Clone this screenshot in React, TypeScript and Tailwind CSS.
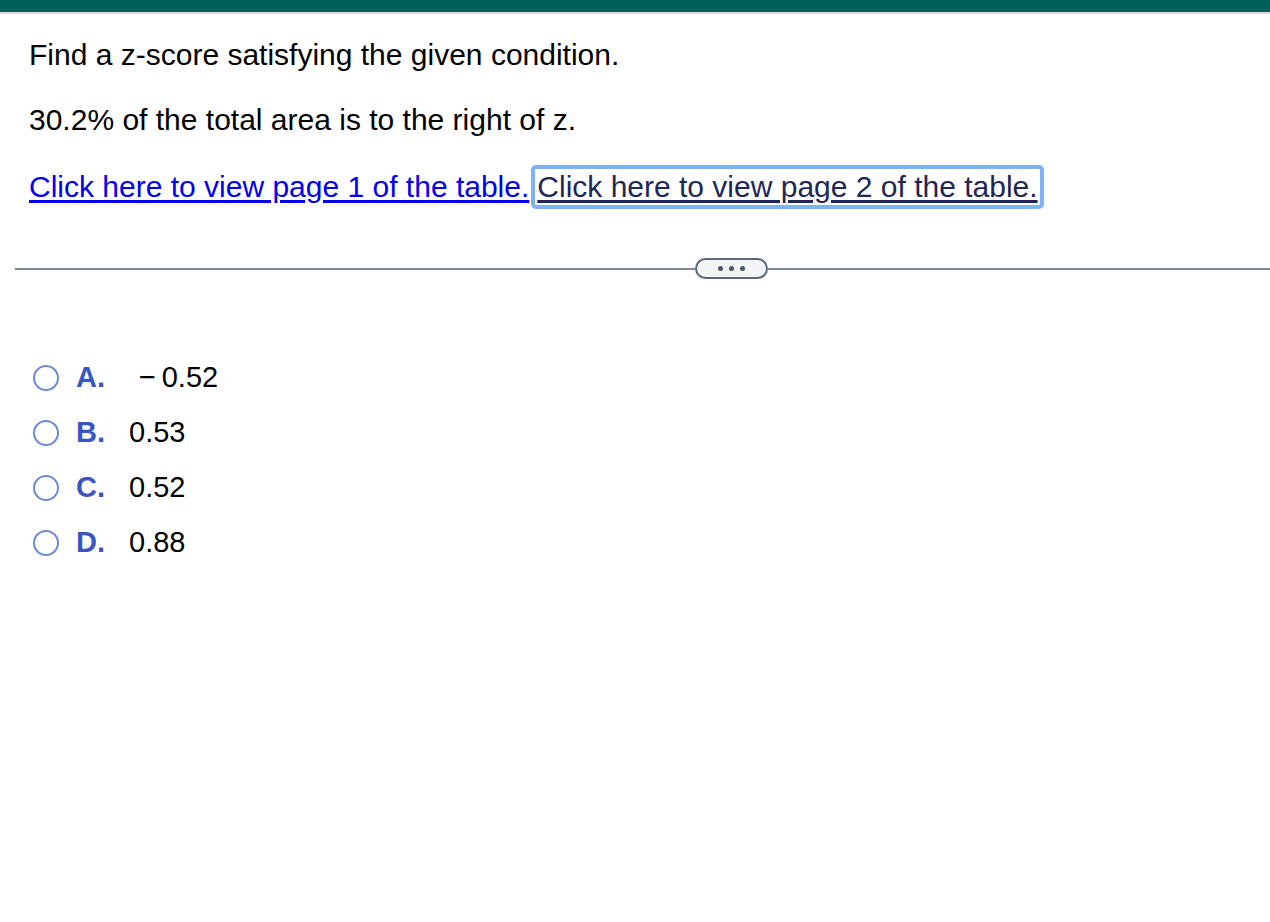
import React from "react";

const options = [
  { letter: "A.", value: "\u2212\u20090.52", pad: "pl-[10px]" },
  { letter: "B.", value: "0.53", pad: "" },
  { letter: "C.", value: "0.52", pad: "" },
  { letter: "D.", value: "0.88", pad: "" },
];

const Radio = () => (
  <span className="inline-block w-[26px] h-[26px] rounded-full border-2 border-[#6d8ad8] bg-white shrink-0" />
);

const App = () => {
  return (
    <div className="w-[1270px] h-[922px] bg-white text-black font-['Liberation_Sans',Arial,sans-serif] overflow-hidden">
      <div className="h-[12px] bg-[#006156]" />
      <div className="h-[2px] bg-[#d5dbe0]" />
      <div className="pl-[29px] pt-[24px]">
        <p className="text-[30px] leading-[34px]">Find a z-score satisfying the given condition.</p>
        <p className="text-[30px] leading-[34px] mt-[31px]">30.2% of the total area is to the right of z.</p>
        <div className="mt-[28px] flex items-center text-[30px] leading-[34px]">
          <a href="#" className="text-[#0000ee] underline underline-offset-[3px]">Click here to view page 1 of the table.</a>
          <a href="#" className="ml-[2px] px-[2px] py-[1px] border-[4px] border-[#80b1f5] rounded-[5px] text-[#1e2756] underline underline-offset-[3px]">Click here to view page 2 of the table.</a>
        </div>
      </div>
      <div className="ml-[15px] mt-[49px] flex items-center">
        <div className="h-[2px] bg-[#7e8895] w-[680px]" />
        <div className="w-[73px] h-[21px] rounded-full border-2 border-[#5d6979] bg-[#f3f4f6] flex items-center justify-center gap-[6px]">
          <span className="w-[5px] h-[5px] rounded-full bg-[#4b5563]" />
          <span className="w-[5px] h-[5px] rounded-full bg-[#4b5563]" />
          <span className="w-[5px] h-[5px] rounded-full bg-[#4b5563]" />
        </div>
        <div className="h-[2px] bg-[#7e8895] flex-1" />
      </div>
      <div className="pl-[33px] mt-[84px] flex flex-col gap-[25px]">
        {options.map((o) => (
          <div key={o.letter} className="flex items-center h-[30px]">
            <Radio />
            <span className="ml-[17px] w-[53px] text-[29px] font-bold text-[#3a55c2]">{o.letter}</span>
            <span className={`text-[29px] ${o.pad}`}>{o.value}</span>
          </div>
        ))}
      </div>
    </div>
  );
};

export default App;
